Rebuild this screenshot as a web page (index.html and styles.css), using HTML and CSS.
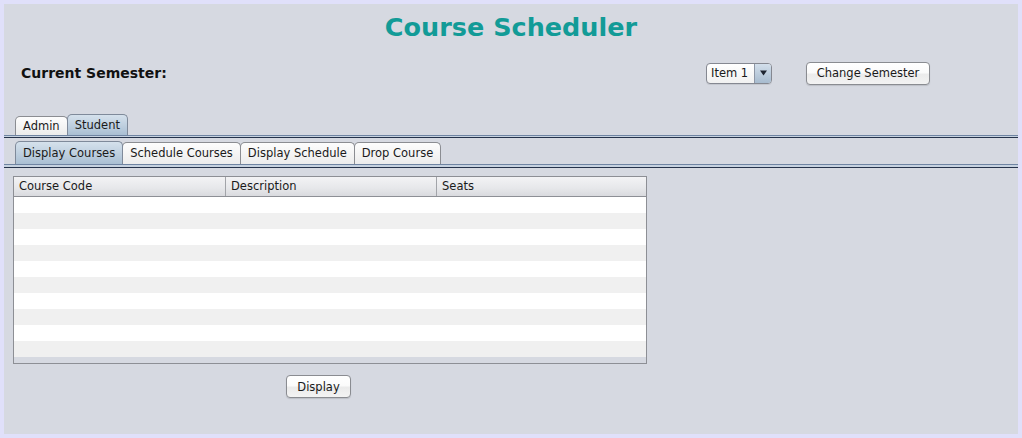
FILE: index.html
```html
<!DOCTYPE html>
<html lang="en">
<head>
<meta charset="utf-8">
<title>Course Scheduler</title>
<link rel="stylesheet" href="styles.css">
</head>
<body>
<div class="frame">
  <h1 class="title">Course Scheduler</h1>
  <div class="semester-row">
    <span class="sem-label">Current Semester:</span>
    <div class="combo">
      <span class="combo-text">Item 1</span>
      <span class="combo-arrow"><svg width="7" height="6" viewBox="0 0 7 6"><path d="M0 0.5H7L3.5 5.5Z" fill="#1e2430"/></svg></span>
    </div>
    <button class="btn btn-change">Change Semester</button>
  </div>
  <div class="tabs outer-tabs">
    <div class="tab">Admin</div>
    <div class="tab selected">Student</div>
  </div>
  <div class="tab-rule"></div>
  <div class="tabs inner-tabs">
    <div class="tab selected">Display Courses</div>
    <div class="tab">Schedule Courses</div>
    <div class="tab">Display Schedule</div>
    <div class="tab">Drop Course</div>
  </div>
  <div class="tab-rule tab-rule-inner"></div>
  <div class="table">
    <div class="thead">
      <div class="th col1">Course Code</div>
      <div class="th col2">Description</div>
      <div class="th col3">Seats</div>
    </div>
    <div class="tbody">
      <div class="row"></div>
      <div class="row"></div>
      <div class="row"></div>
      <div class="row"></div>
      <div class="row"></div>
      <div class="row"></div>
      <div class="row"></div>
      <div class="row"></div>
      <div class="row"></div>
      <div class="row"></div>
    </div>
  </div>
  <div class="actions">
    <button class="btn btn-display">Display</button>
  </div>
</div>
</body>
</html>
```

FILE: styles.css
```css
* { box-sizing: border-box; }

html, body {
  margin: 0;
  padding: 0;
  background: #e0e0fa;
}

body {
  font-family: "DejaVu Sans", sans-serif;
  font-size: 11.5px;
  color: #1a1a1a;
}

.frame {
  margin: 4px;
  width: 1014px;
  height: 430px;
  background: #d6d9e1;
  display: flex;
  flex-direction: column;
  overflow: hidden;
}

.title {
  margin: 8px 0 0 0;
  height: 30px;
  line-height: 30px;
  text-align: center;
  font-family: "DejaVu Sans", sans-serif;
  font-weight: bold;
  font-size: 25.5px;
  color: #129b97;
}

.semester-row {
  margin-top: 19px;
  height: 24px;
  display: flex;
  align-items: center;
  padding-left: 17px;
  padding-right: 88px;
}

.sem-label {
  font-weight: bold;
  font-size: 14px;
  color: #111;
  margin-right: auto;
}

.combo {
  width: 66px;
  height: 21px;
  display: flex;
  border: 1px solid #858891;
  border-radius: 4px;
  background: linear-gradient(#ffffff, #f1f1f1);
  overflow: hidden;
  box-shadow: 0 1px 0 rgba(0,0,0,0.08);
}

.combo-text {
  flex: 1;
  padding-left: 4px;
  line-height: 19px;
  color: #1a1a1a;
}

.combo-arrow {
  width: 17px;
  border-left: 1px solid #8e97a6;
  background: linear-gradient(#d3dfeb, #a7bbcf);
  display: flex;
  align-items: center;
  justify-content: center;
}

.btn {
  font-family: "DejaVu Sans", sans-serif;
  font-size: 11.5px;
  color: #1a1a1a;
  height: 23px;
  padding: 0;
  border: 1px solid #8a8c91;
  border-radius: 4px;
  background: linear-gradient(#ffffff, #fbfbfb 45%, #ebebeb 55%, #f3f3f3);
  box-shadow: 0 1px 1px rgba(0,0,0,0.12);
}

.btn-change {
  width: 124px;
  margin-left: 34px;
}

.tabs {
  display: flex;
  align-items: flex-end;
  padding-left: 11px;
}

.outer-tabs {
  margin-top: 29px;
  height: 21px;
}

.inner-tabs {
  margin-top: 3px;
  height: 23px;
}

.tab {
  height: 19px;
  line-height: 18px;
  padding: 0 7px;
  border: 1px solid #8b8d92;
  border-bottom: none;
  border-radius: 5px 5px 0 0;
  background: linear-gradient(#fdfdfd, #ececec);
  color: #1a1a1a;
  margin-right: -1px;
}

.inner-tabs .tab {
  height: 22px;
  line-height: 21px;
}

.tab.selected {
  height: 21px;
  line-height: 21px;
  background: linear-gradient(#d5e1ec, #aabfd3);
  border-color: #7f8a9a;
  position: relative;
  z-index: 1;
}

.inner-tabs .tab.selected {
  height: 23px;
  line-height: 23px;
}

.tab-rule {
  height: 3px;
  border-top: 1px solid #6f84a2;
  border-bottom: 1px solid #25324a;
  background: #c6d2e0;
}

.tab-rule-inner {
  height: 4px;
}

.table {
  margin: 8px 0 0 9px;
  width: 634px;
  height: 188px;
  border: 1px solid #8d8f95;
  display: flex;
  flex-direction: column;
  background: #d6d9e1;
}

.thead {
  height: 20px;
  display: flex;
  border-bottom: 1px solid #8d8f95;
  background: linear-gradient(#f3f3f5, #e6e7ea 60%, #d9dade);
}

.th {
  line-height: 19px;
  padding-left: 5px;
  color: #1a1a1a;
  border-right: 1px solid #a2a4a9;
}

.col1 { width: 212px; }
.col2 { width: 211px; }
.col3 { flex: 1; border-right: none; }

.row {
  height: 16px;
  background: #ffffff;
}

.row:nth-child(even) {
  background: #f0f0f0;
}

.actions {
  margin-top: 11px;
  display: flex;
  padding-left: 282px;
}

.btn-display {
  width: 65px;
}
```
